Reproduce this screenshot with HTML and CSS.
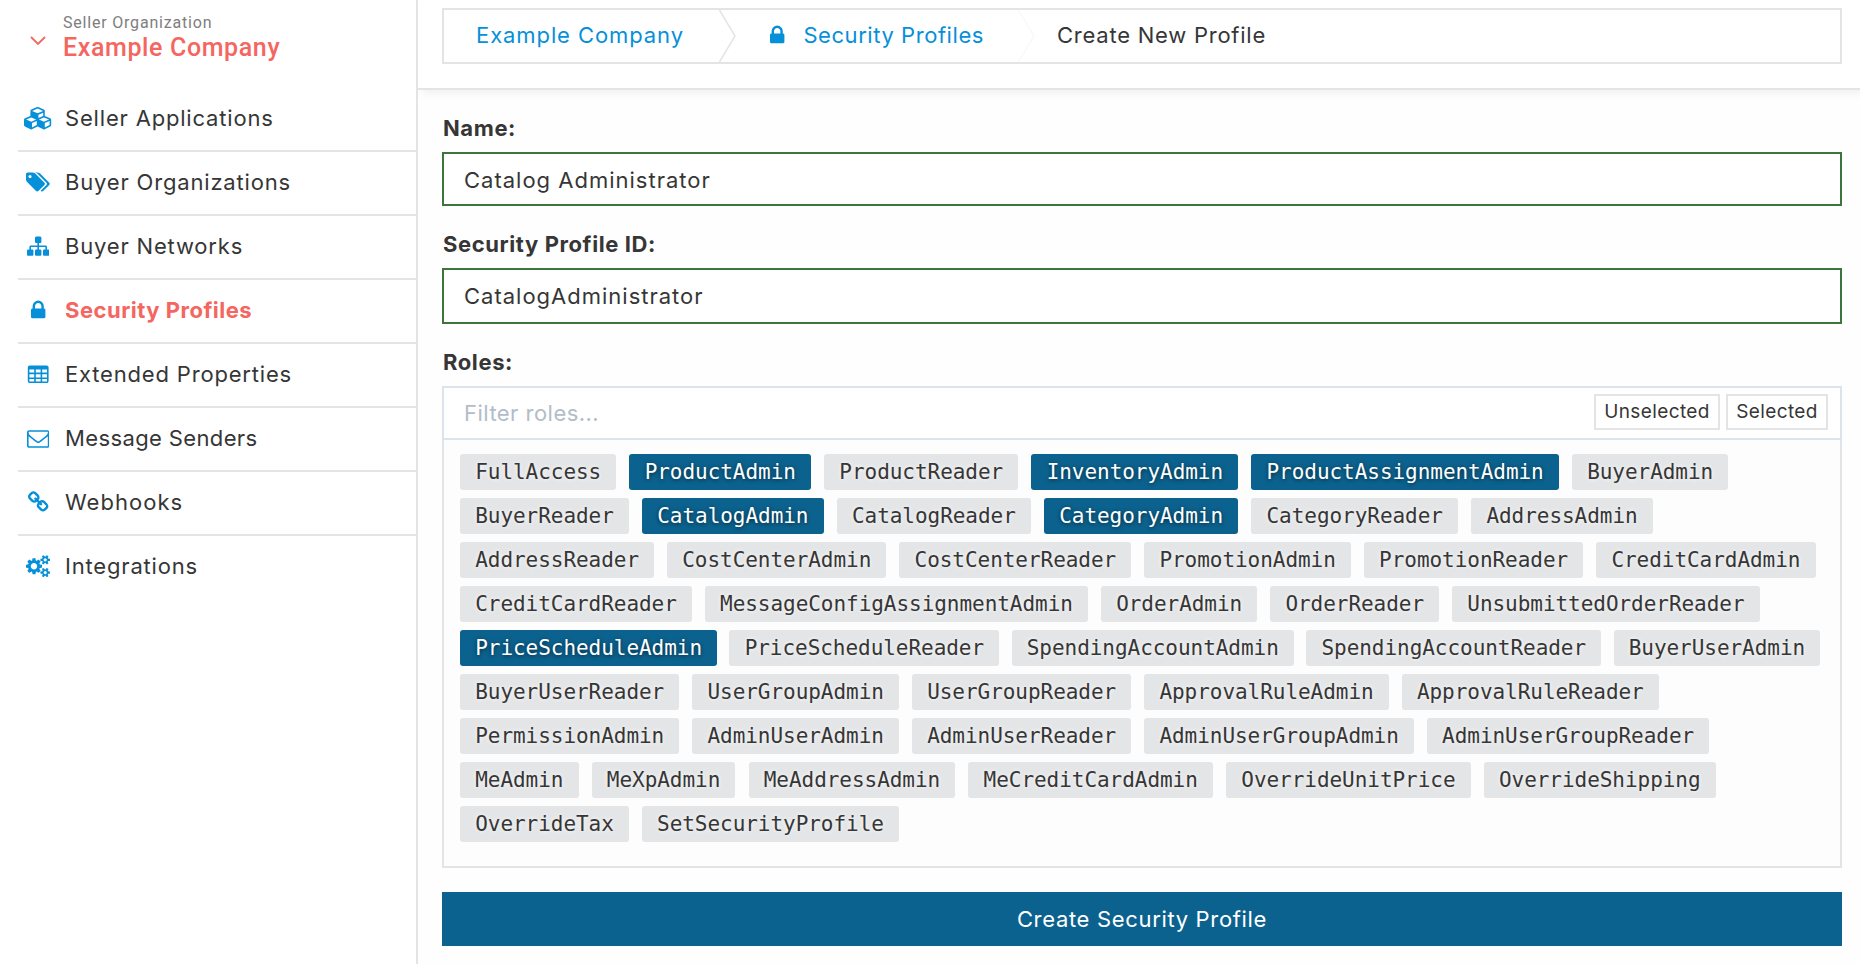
FILE: index.html
```html
<!DOCTYPE html>
<html lang="en">
<head>
<meta charset="utf-8">
<title>Create New Profile</title>
<link rel="stylesheet" href="styles.css">
</head>
<body>
<div class="app">
  <aside class="sidebar">
    <div class="org">
      <svg class="org-caret" viewBox="0 0 16 10"><path d="M1 1l7 7 7-7"/></svg>
      <div class="org-text">
        <div class="org-kind">Seller Organization</div>
        <div class="org-name">Example Company</div>
      </div>
    </div>
    <nav class="nav">
      <a class="nav-item"><span class="nav-icon"><svg class="icon icon-cubes" viewBox="0 0 2304 1792"><path d="M640 1632l384-192v-314l-384 164v342zm-64-454l404-173-404-173-404 173zm1088 454l384-192v-314l-384 164v342zm-64-454l404-173-404-173-404 173zm-448-293l384-165v-266l-384 164v267zm-64-379l441-189-441-189-441 189zm1088 518v416q0 36-19 67t-52 47l-448 224q-25 14-57 14t-57-14l-448-224q-5-2-7-4-2 2-7 4l-448 224q-25 14-57 14t-57-14l-448-224q-33-16-52-47t-19-67v-416q0-38 21.5-70t56.5-48l434-186v-400q0-38 21.5-70t56.5-48l448-192q23-10 50-10t50 10l448 192q35 16 56.5 48t21.5 70v400l434 186q36 16 57 48t21 70z"/></svg></span><span class="nav-text">Seller Applications</span></a>
      <a class="nav-item"><span class="nav-icon"><svg class="icon icon-wide" viewBox="128 0 1920 1792"><path d="M576 448q0-53-37.500-90.500t-90.500-37.500-90.500 37.500-37.500 90.500 37.500 90.500 90.500 37.500 90.500-37.500 37.500-90.500zm1067 576q0 53-37 90l-491 492q-39 37-91 37-53 0-90-37l-715-716q-38-37-64.500-101t-26.500-117v-416q0-52 38-90t90-38h416q53 0 117 26.500t102 64.500l715 714q37 39 37 91zm384 0q0 53-37 90l-491 492q-39 37-91 37-36 0-59-14t-53-45l470-470q37-37 37-90 0-52-37-91l-715-714q-38-38-102-64.500t-117-26.500h224q53 0 117 26.500t102 64.500l715 714q37 39 37 91z"/></svg></span><span class="nav-text">Buyer Organizations</span></a>
      <a class="nav-item"><span class="nav-icon"><svg class="icon" viewBox="0 0 1792 1792"><path d="M1792 1248v320q0 40-28 68t-68 28h-320q-40 0-68-28t-28-68v-320q0-40 28-68t68-28h96v-192h-512v192h96q40 0 68 28t28 68v320q0 40-28 68t-68 28h-320q-40 0-68-28t-28-68v-320q0-40 28-68t68-28h96v-192h-512v192h96q40 0 68 28t28 68v320q0 40-28 68t-68 28h-320q-40 0-68-28t-28-68v-320q0-40 28-68t68-28h96v-192q0-52 38-90t90-38h512v-192h-96q-40 0-68-28t-28-68v-320q0-40 28-68t68-28h320q40 0 68 28t28 68v320q0 40-28 68t-68 28h-96v192h512q52 0 90 38t38 90v192h96q40 0 68 28t28 68z"/></svg></span><span class="nav-text">Buyer Networks</span></a>
      <a class="nav-item active"><span class="nav-icon"><svg class="icon" viewBox="0 0 1792 1792"><path d="M640 768h512v-192q0-106-75-181t-181-75-181 75-75 181v192zm832 96v576q0 40-28 68t-68 28h-960q-40 0-68-28t-28-68v-576q0-40 28-68t68-28h32v-192q0-184 132-316t316-132 316 132 132 316v192h32q40 0 68 28t28 68z"/></svg></span><span class="nav-text">Security Profiles</span></a>
      <a class="nav-item"><span class="nav-icon"><svg class="icon" viewBox="0 0 1792 1792"><path fill-rule="evenodd" d="M224 192h1344q66 0 113 47t47 113v1088q0 66-47 113t-113 47H224q-66 0-113-47t-47-113V352q0-66 47-113t113-47zM192 512h384v256H192zM704 512h384v256H704zM1216 512h384v256h-384zM192 896h384v256H192zM704 896h384v256H704zM1216 896h384v256h-384zM192 1280h384v192H192zM704 1280h384v192H704zM1216 1280h384v192h-384z"/></svg></span><span class="nav-text">Extended Properties</span></a>
      <a class="nav-item"><span class="nav-icon"><svg class="icon" viewBox="0 0 1792 1792"><path d="M1664 1504v-768q-32 36-69 66-268 206-426 338-51 43-83 67t-86.500 48.500-102.500 24.500h-2q-48 0-102.500-24.500t-86.500-48.500-83-67q-158-132-426-338-37-30-69-66v768q0 13 9.500 22.500t22.500 9.500h1472q13 0 22.500-9.500t9.500-22.500zm0-1051v-24.500l-.5-13-3-12.500-5.500-9-9-7.500-14-2.500h-1472q-13 0-22.500 9.500t-9.500 22.500q0 168 147 284 193 152 401 317 6 5 35 29.500t46 37.500 44.500 31.500 50.500 27.500 43 9h2q20 0 43-9t50.500-27.500 44.500-31.500 46-37.500 35-29.500q208-165 401-317 54-43 100.500-115.500t46.500-131.500zm128-37v1088q0 66-47 113t-113 47h-1472q-66 0-113-47t-47-113v-1088q0-66 47-113t113-47h1472q66 0 113 47t47 113z"/></svg></span><span class="nav-text nav-text-tight">Message Senders</span></a>
      <a class="nav-item"><span class="nav-icon"><svg class="icon" viewBox="0 0 1792 1792"><path d="M1520 1216q0-40-28-68l-208-208q-28-28-68-28-42 0-72 32 3 3 19 18.500t21.500 21.500 15 19 13 25.500 3.500 27.500q0 40-28 68t-68 28q-15 0-27.500-3.500t-25.500-13-19-15-21.500-21.500-18.500-19q-33 31-33 73 0 40 28 68l206 207q27 27 68 27 40 0 68-26l147-146q28-28 28-67zm-703-705q0-40-28-68l-206-207q-28-28-68-28-39 0-68 27l-147 146q-28 28-28 67 0 40 28 68l208 208q27 27 68 27 42 0 72-31-3-3-19-18.500t-21.500-21.500-15-19-13-25.500-3.500-27.500q0-40 28-68t68-28q15 0 27.500 3.500t25.500 13 19 15 21.500 21.500 18.500 19q33-31 33-73zm895 705q0 120-85 203l-147 146q-83 83-203 83-121 0-204-85l-206-207q-83-83-83-203 0-123 88-209l-88-88q-86 88-208 88-120 0-204-84l-208-208q-84-84-84-204t85-203l147-146q83-83 203-83 121 0 204 85l206 207q83 83 83 203 0 123-88 209l88 88q86-88 208-88 120 0 204 84l208 208q84 84 84 204z"/></svg></span><span class="nav-text nav-text-loose">Webhooks</span></a>
      <a class="nav-item"><span class="nav-icon"><svg class="icon icon-wide" viewBox="0 0 1920 1792"><path d="M896 896q0-106-75-181t-181-75-181 75-75 181 75 181 181 75 181-75 75-181zm768 512q0-52-38-90t-90-38-90 38-38 90q0 53 37.500 90.500t90.500 37.500 90.500-37.500 37.500-90.500zm0-1024q0-52-38-90t-90-38-90 38-38 90q0 53 37.500 90.500t90.500 37.500 90.500-37.500 37.500-90.500zm-384 421v185q0 10-7 19.500t-16 10.500l-155 24q-11 35-32 76 34 48 90 115 7 11 7 20 0 12-7 19-23 30-82.500 89.500t-78.500 59.500q-11 0-21-7l-115-90q-37 19-77 31-11 108-23 155-7 24-30 24h-186q-11 0-20-7.500t-10-17.500l-23-153q-34-10-75-31l-118 89q-7 7-20 7-11 0-21-8-144-133-144-160 0-9 7-19 10-14 41-53t47-61q-23-44-35-82l-152-24q-10-1-17-9.500t-7-19.500v-185q0-10 7-19.500t16-10.500l155-24q11-35 32-76-34-48-90-115-7-11-7-20 0-12 7-20 22-30 82-89t79-59q11 0 21 7l115 90q34-18 77-32 11-108 23-154 7-24 30-24h186q11 0 20 7.500t10 17.500l23 153q34 10 75 31l118-89q8-7 20-7 11 0 21 8 144 133 144 160 0 8-7 19-12 16-42 54t-45 60q23 48 34 82l152 23q10 2 17 10.500t7 19.500zm640 533v140q0 16-149 31-12 27-30 52 51 113 51 138 0 4-4 7-122 71-124 71-8 0-46-47t-52-68q-20 2-30 2t-30-2q-14 21-52 68t-46 47q-2 0-124-71-4-3-4-7 0-25 51-138-18-25-30-52-149-15-149-31v-140q0-16 149-31 13-29 30-52-51-113-51-138 0-4 4-7 4-2 35-20t59-34 30-16q8 0 46 46.500t52 67.500q20-2 30-2t30 2q51-71 92-112l6-2q4 0 124 70 4 3 4 7 0 25-51 138 17 23 30 52 149 15 149 31zm0-1024v140q0 16-149 31-12 27-30 52 51 113 51 138 0 4-4 7-122 71-124 71-8 0-46-47t-52-68q-20 2-30 2t-30-2q-14 21-52 68t-46 47q-2 0-124-71-4-3-4-7 0-25 51-138-18-25-30-52-149-15-149-31v-140q0-16 149-31 13-29 30-52-51-113-51-138 0-4 4-7 4-2 35-20t59-34 30-16q8 0 46 46.500t52 67.500q20-2 30-2t30 2q51-71 92-112l6-2q4 0 124 70 4 3 4 7 0 25-51 138 17 23 30 52 149 15 149 31z"/></svg></span><span class="nav-text">Integrations</span></a>
    </nav>
  </aside>
  <main class="main">
    <header class="header">
      <div class="crumbs">
        <a class="crumb crumb-root"><span>Example Company</span></a>
        <svg class="chevron" viewBox="0 0 17 52"><path d="M0.500 0L16 26 0.500 52"/></svg>
        <a class="crumb crumb-profiles"><svg class="icon" viewBox="0 0 1792 1792"><path d="M640 768h512v-192q0-106-75-181t-181-75-181 75-75 181v192zm832 96v576q0 40-28 68t-68 28h-960q-40 0-68-28t-28-68v-576q0-40 28-68t68-28h32v-192q0-184 132-316t316-132 316 132 132 316v192h32q40 0 68 28t28 68z"/></svg><span>Security Profiles</span></a>
        <svg class="chevron chevron-faint" viewBox="0 0 17 52"><path d="M0.500 0L16 26 0.500 52"/></svg>
        <span class="crumb crumb-current"><span>Create New Profile</span></span>
      </div>
    </header>
    <div class="content">
      <div class="label label-name">Name:</div>
      <div class="input input-name"><span>Catalog Administrator</span></div>
      <div class="label label-id">Security Profile ID:</div>
      <div class="input input-id"><span>CatalogAdministrator</span></div>
      <div class="label label-roles">Roles:</div>
      <div class="filter">
        <span class="placeholder">Filter roles...</span>
        <button class="toggle toggle-off">Unselected</button>
        <button class="toggle toggle-on">Selected</button>
      </div>
      <div class="roles">
        <div class="row row-loose"><span class="role">FullAccess</span><span class="role on">ProductAdmin</span><span class="role">ProductReader</span><span class="role on">InventoryAdmin</span><span class="role on">ProductAssignmentAdmin</span><span class="role">BuyerAdmin</span></div>
        <div class="row row-loose"><span class="role">BuyerReader</span><span class="role on">CatalogAdmin</span><span class="role">CatalogReader</span><span class="role on">CategoryAdmin</span><span class="role">CategoryReader</span><span class="role">AddressAdmin</span></div>
        <div class="row"><span class="role">AddressReader</span><span class="role">CostCenterAdmin</span><span class="role">CostCenterReader</span><span class="role">PromotionAdmin</span><span class="role">PromotionReader</span><span class="role">CreditCardAdmin</span></div>
        <div class="row"><span class="role">CreditCardReader</span><span class="role">MessageConfigAssignmentAdmin</span><span class="role">OrderAdmin</span><span class="role">OrderReader</span><span class="role">UnsubmittedOrderReader</span></div>
        <div class="row row-tight"><span class="role on">PriceScheduleAdmin</span><span class="role">PriceScheduleReader</span><span class="role">SpendingAccountAdmin</span><span class="role">SpendingAccountReader</span><span class="role">BuyerUserAdmin</span></div>
        <div class="row"><span class="role">BuyerUserReader</span><span class="role">UserGroupAdmin</span><span class="role">UserGroupReader</span><span class="role">ApprovalRuleAdmin</span><span class="role">ApprovalRuleReader</span></div>
        <div class="row"><span class="role">PermissionAdmin</span><span class="role">AdminUserAdmin</span><span class="role">AdminUserReader</span><span class="role">AdminUserGroupAdmin</span><span class="role">AdminUserGroupReader</span></div>
        <div class="row row-loose"><span class="role">MeAdmin</span><span class="role">MeXpAdmin</span><span class="role">MeAddressAdmin</span><span class="role">MeCreditCardAdmin</span><span class="role">OverrideUnitPrice</span><span class="role">OverrideShipping</span></div>
        <div class="row"><span class="role">OverrideTax</span><span class="role">SetSecurityProfile</span></div>
      </div>
      <button class="submit">Create Security Profile</button>
    </div>
  </main>
</div>
</body>
</html>
```
FILE: styles.css
```css
* { box-sizing: border-box; }
body {
  margin: 0;
  height: 964px;
  overflow: hidden;
  background: #fff;
  color: #363636;
  font-family: Inter, "Open Sans", sans-serif;
  font-size: 22px;
}
.app { display: flex; height: 964px; }

.sidebar {
  width: 418px;
  flex: none;
  padding-left: 18px;
  border-right: 2px solid #e3e4e6;
}
.org { display: flex; height: 88px; padding: 13px 0 0 12px; }
.org-caret { width: 16px; height: 10px; margin: 23px 17px 0 0; fill: none; stroke: #f4665f; stroke-width: 1.8; }
.org-text { font-family: Roboto, sans-serif; }
.org-kind { font-size: 16px; line-height: 20px; color: #7d7d7d; letter-spacing: 0.8px; }
.org-name { font-size: 25px; line-height: 30px; font-weight: 500; color: #f4665f; letter-spacing: 0.62px; }

.nav-item {
  display: flex;
  align-items: center;
  height: 64px;
  border-bottom: 2px solid #e3e4e6;
}
.nav-item:last-child { border-bottom: 0; height: 62px; }
.nav-item.active { color: #f4665f; font-weight: 700; }
.nav-icon { width: 40px; margin-right: 7px; display: flex; justify-content: center; margin-top: -1px; }
.nav-text { letter-spacing: 0.82px; padding-bottom: 2px; }
.nav-text-tight { letter-spacing: 0.37px; }
.nav-text-loose { letter-spacing: 1.04px; }
.active .nav-text { letter-spacing: 0.5px; }
.icon { width: 22.4px; height: 22.4px; fill: #0590d9; flex: none; display: block; }
.icon-wide { width: 24px; }
.icon-cubes { width: 28.8px; }

.main { flex: 1; min-width: 0; background: #fefefe; }
.header {
  height: 90px;
  padding: 8px 18px 0 24px;
  background: #fff;
  border-bottom: 2px solid #e3e4e6;
  box-shadow: 4px 4px 8px rgba(0, 0, 0, 0.05);
}
.crumbs { display: flex; align-items: center; height: 56px; border: 2px solid #e3e4e6; }
.crumb { display: flex; align-items: center; color: #0590d9; white-space: nowrap; }
.crumb span { padding-bottom: 2px; }
.crumb-root { width: 275px; padding-left: 32px; letter-spacing: 0.91px; }
.crumb-profiles { width: 282px; padding-left: 30px; letter-spacing: 0.56px; }
.crumb-profiles .icon { margin-right: 15px; margin-top: -1px; }
.crumb-current { color: #363636; padding-left: 22px; letter-spacing: 0.76px; }
.chevron { width: 17px; height: 52px; fill: none; stroke: #e3e4e6; stroke-width: 1.5; flex: none; }
.chevron-faint { stroke: #f9f9f9; }

.content { padding: 22px 18px 0 24px; }
.label { font-weight: 700; line-height: 30px; height: 44px; padding: 5px 0 0 1px; letter-spacing: 0.6px; }
.label-name { height: 40px; padding-top: 1px; }
.label-id, .label-roles { margin-top: 18px; }
.input {
  display: flex;
  align-items: center;
  height: 54px;
  padding-left: 20px;
  border: 2px solid #3c763d;
  background: #fff;
  letter-spacing: 1px;
}
.input-name { padding-top: 1px; }
.input-id { height: 56px; }
.filter {
  display: flex;
  align-items: flex-start;
  height: 54px;
  padding: 6px 12px 0 20px;
  border: 2px solid #dbe4ec;
  background: #fff;
}
.placeholder { flex: 1; color: #b3bdc8; line-height: 38px; letter-spacing: 0.47px; }
.toggle {
  height: 36px;
  width: 126px;
  padding: 0;
  border: 2px solid #e3e4e6;
  background: #fff;
  color: #363636;
  font: 19px/32px Inter, "Open Sans", sans-serif;
  letter-spacing: 0.4px;
}
.toggle-on { width: 102px; margin-left: 6px; }
.roles {
  height: 428px;
  padding: 14px 0 0 16px;
  display: flex;
  flex-direction: column;
  gap: 8px;
  border: 2px solid #e3e4e6;
  border-top: 0;
  background: #fdfdfd;
}
.row { display: flex; gap: 12.9px; }
.row-loose { gap: 13.1px; }
.row-tight { gap: 12.3px; }
.role {
  padding: 0 15.2px;
  height: 36px;
  line-height: 37px;
  border-radius: 3px;
  background: #e4e5e7;
  font-family: "DejaVu Sans Mono", monospace;
  font-size: 21px;
  letter-spacing: -0.043px;
  white-space: nowrap;
  text-shadow: 0 0 4px #fff;
}
.role.on { background: #0c628e; color: #fff; text-shadow: 0 1px 4px rgba(0, 0, 0, 0.6); }
.submit {
  display: block;
  width: 100%;
  height: 54px;
  margin-top: 24px;
  padding: 0;
  border: 0;
  background: #0c628e;
  color: #fff;
  font: 22px Inter, "Open Sans", sans-serif;
  letter-spacing: 0.67px;
}
```
